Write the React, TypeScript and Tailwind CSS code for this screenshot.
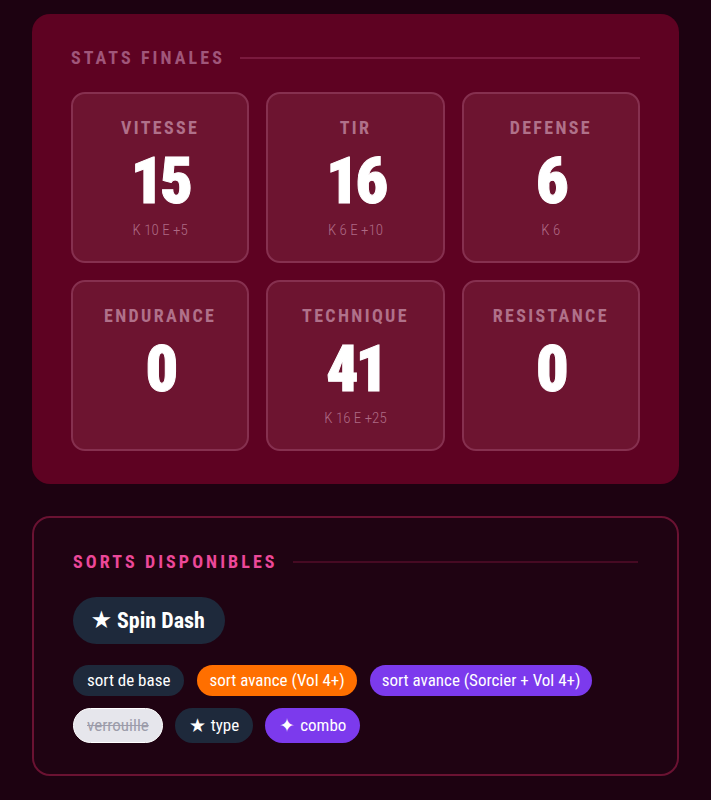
import React from "react";

type Stat = { label: string; value: number; detail?: string };

const stats: Stat[] = [
  { label: "VITESSE", value: 15, detail: "K 10 E +5" },
  { label: "TIR", value: 16, detail: "K 6 E +10" },
  { label: "DEFENSE", value: 6, detail: "K 6" },
  { label: "ENDURANCE", value: 0 },
  { label: "TECHNIQUE", value: 41, detail: "K 16 E +25" },
  { label: "RESISTANCE", value: 0 },
];

function SectionTitle({ children, pink }: { children: string; pink?: boolean }) {
  return (
    <div className="flex items-center gap-[15px]">
      <h2
        className={
          pink
            ? "text-[18px] font-bold tracking-[0.17em] text-[#ec4899] leading-none"
            : "text-[18px] font-bold tracking-[0.17em] text-[#a0567a] leading-none"
        }
      >
        {children}
      </h2>
      <div className={pink ? "h-[2px] flex-1 bg-[#460a23]" : "h-[2px] flex-1 bg-[#7a1a3e]"} />
    </div>
  );
}

function StatCard({ stat }: { stat: Stat }) {
  return (
    <div className="flex h-[171px] flex-col items-center rounded-[14px] border-2 border-[#86304f] bg-[#6d1430] pt-[25px]">
      <div className="text-[18px] font-bold tracking-[0.13em] text-[#b0718a] leading-none">
        {stat.label}
      </div>
      <div className="mt-[13px] text-[64px] font-black text-white leading-none tracking-[-0.05em] [-webkit-text-stroke:1px_#ffffff]">
        {stat.value}
      </div>
      {stat.detail && (
        <div className="mt-[9px] text-[15px] font-light text-[#ae6a85] leading-none">
          {stat.detail}
        </div>
      )}
    </div>
  );
}

export default function App() {
  return (
    <div className="min-h-[800px] bg-[#1d0211] px-8 pt-[14px] pb-6 font-['Roboto_Condensed',Roboto,sans-serif]">
      <section className="rounded-[18px] bg-[#5e0222] px-[39px] pt-[35px] pb-[33px]">
        <SectionTitle>STATS FINALES</SectionTitle>
        <div className="mt-[25px] grid grid-cols-3 gap-[17px]">
          {stats.map((s) => (
            <StatCard key={s.label} stat={s} />
          ))}
        </div>
      </section>

      <section className="mt-[32px] rounded-[18px] border-2 border-[#6a1232] bg-[#1f0312] px-[39px] pt-[35px] pb-[31px]">
        <SectionTitle pink>SORTS DISPONIBLES</SectionTitle>
        <div className="mt-[26px] flex">
          <div className="flex h-[47px] items-center gap-[6px] rounded-full bg-[#1e293b] pl-[19px] pr-[20px] text-[22px] font-bold text-white">
            <span className="text-[21px] leading-none">★</span>
            <span className="leading-none">Spin Dash</span>
          </div>
        </div>
        <div className="mt-[21px] flex gap-[13px] text-[17px] text-white">
          <span className="flex h-[31px] items-center rounded-full bg-[#1e293b] px-[14px]">
            sort de base
          </span>
          <span className="flex h-[31px] items-center rounded-full bg-[#ff6f00] px-[12px]">
            sort avance (Vol 4+)
          </span>
          <span className="flex h-[31px] items-center rounded-full bg-[#7c3aed] px-[12px]">
            sort avance (Sorcier + Vol 4+)
          </span>
        </div>
        <div className="mt-[12px] flex gap-[12px] text-[17px] text-white">
          <span className="flex h-[35px] items-center rounded-full border border-white bg-[#e6e6ec] px-[13px] text-[#9c9caa] line-through">
            verrouille
          </span>
          <span className="flex h-[35px] items-center gap-[5px] rounded-full bg-[#1e293b] px-[14px]">
            <span className="text-[19px] leading-none">★</span>
            type
          </span>
          <span className="flex h-[35px] items-center gap-[5px] rounded-full bg-[#7c3aed] px-[14px]">
            <span className="text-[19px] leading-none">✦</span>
            combo
          </span>
        </div>
      </section>
    </div>
  );
}
